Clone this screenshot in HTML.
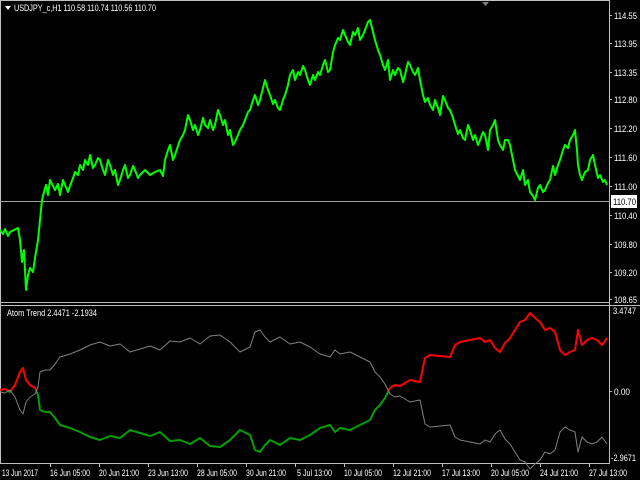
<!DOCTYPE html>
<html><head><style>
body{margin:0;background:#000;width:640px;height:480px;overflow:hidden;font-family:"Liberation Sans",sans-serif;}
svg{display:block}
text{font-family:"Liberation Sans",sans-serif;font-size:9px;fill:#fff}
</style></head><body>
<svg width="640" height="480" viewBox="0 0 640 480">
<defs>
<clipPath id="up"><rect x="0" y="300" width="610" height="91"/></clipPath>
<clipPath id="dn"><rect x="0" y="391" width="610" height="80"/></clipPath>
<polyline id="il" fill="none" stroke-linejoin="round" points="0,390 5,389 10,392 15,385 20,372 23,368 26,380 30,385 35,388 38,395 40,410 45,412 50,412 55,418 60,425 70,428 80,432 90,437 100,440 110,436 120,438 130,430 140,433 150,436 160,432 170,441 180,440 190,444 200,438 210,446 220,447 230,440 240,430 250,435 255,450 260,452 265,445 270,440 280,445 290,438 300,440 310,435 320,428 330,425 335,432 340,428 350,430 360,425 370,420 375,410 380,405 385,398 390,388 395,385 400,386 410,380 420,382 425,358 430,355 440,356 450,357 455,345 460,342 470,340 480,338 485,342 490,340 495,348 500,352 505,343 510,338 515,330 520,322 525,320 530,313 535,318 540,322 545,330 550,328 555,332 560,350 565,355 570,352 575,350 578,330 582,345 587,340 592,338 597,340 602,345 607,338"/>
</defs>
<line x1="609.5" y1="0" x2="609.5" y2="464" stroke="#c0c0c0"/>
<line x1="0" y1="302.5" x2="610" y2="302.5" stroke="#c0c0c0"/>
<line x1="0" y1="305.5" x2="640" y2="305.5" stroke="#c0c0c0"/>
<line x1="0" y1="463.5" x2="610" y2="463.5" stroke="#c0c0c0"/>
<line x1="0.5" y1="0" x2="0.5" y2="464" stroke="#c0c0c0"/>
<line x1="0" y1="0.5" x2="610" y2="0.5" stroke="#c0c0c0"/>
<line x1="0" y1="201.5" x2="610" y2="201.5" stroke="#a0a0a0"/>
<polygon points="482,2 489,2 485.5,6" fill="#808080"/>
<polyline fill="none" stroke="#00ff00" stroke-width="2" stroke-linejoin="round" points="0,230 3,234 5,229 8,236 10,232 14,230 18,228 20,240 22,262 24,250 26,290 28,275 30,268 33,272 35,258 38,240 42,200 44,192 46,185 48,195 50,180 53,186 55,190 58,184 60,195 63,180 65,185 68,192 70,186 73,178 75,172 78,175 80,165 83,170 85,160 88,165 90,155 93,168 95,165 98,158 100,160 103,170 105,175 108,160 110,165 113,175 115,170 118,185 120,180 123,170 125,165 128,178 130,175 133,166 135,170 138,178 140,175 145,170 150,175 155,172 160,170 163,176 165,160 168,150 170,145 173,160 175,155 178,146 180,140 183,135 185,130 188,115 190,120 193,130 195,125 198,135 200,130 203,118 205,125 208,128 210,120 213,130 215,125 218,110 220,115 223,125 225,120 228,135 230,130 233,145 235,142 238,135 240,130 243,125 245,120 248,112 250,110 253,100 255,95 258,105 260,100 263,88 265,80 268,90 270,95 273,104 275,100 278,108 280,110 283,100 285,95 288,85 290,75 293,70 295,80 298,72 300,75 303,66 305,70 308,80 310,85 313,75 315,80 318,72 320,75 323,65 325,60 328,72 330,70 333,52 335,45 338,38 340,40 343,30 345,35 348,42 350,45 353,32 355,35 358,28 360,40 363,35 365,30 368,22 370,20 373,32 375,40 378,50 380,55 383,65 385,70 388,60 390,80 393,70 395,75 398,68 400,70 403,82 405,75 408,62 410,65 413,72 415,75 418,68 420,80 423,95 425,102 428,98 430,105 433,110 435,100 438,108 440,115 443,96 445,100 448,108 450,110 453,118 455,125 458,134 460,130 463,138 465,140 468,125 470,130 473,140 475,135 478,145 480,140 483,132 485,135 488,150 490,130 493,125 495,120 498,140 500,145 503,150 505,140 508,140 510,145 513,160 515,170 518,176 520,180 523,170 525,185 528,180 530,192 533,196 535,200 538,188 540,185 543,192 545,190 548,183 550,180 553,166 555,175 558,165 560,160 563,150 565,145 568,148 570,140 573,135 575,130 577,150 578,165 580,175 582,180 585,172 588,170 590,160 593,155 595,165 598,178 600,175 603,182 605,180 607,185"/>
<use href="#il" stroke="#ff0000" stroke-width="2" clip-path="url(#up)"/>
<use href="#il" stroke="#00a000" stroke-width="2" clip-path="url(#dn)"/>
<use href="#il" stroke="#808080" stroke-width="1" transform="translate(0,782) scale(1,-1)"/>
<polygon points="5,6 11,6 8,10" fill="#fff"/>
<text x="14" y="11" textLength="142" lengthAdjust="spacingAndGlyphs">USDJPY_c,H1  110.58 110.74 110.56 110.70</text>
<text x="7" y="316" textLength="90" lengthAdjust="spacingAndGlyphs">Atom Trend  2.4471 -2.1934</text>
<g stroke="#c0c0c0">
<line x1="609" y1="15.5" x2="612" y2="15.5"/><line x1="609" y1="43.5" x2="612" y2="43.5"/><line x1="609" y1="72.5" x2="612" y2="72.5"/><line x1="609" y1="99.5" x2="612" y2="99.5"/><line x1="609" y1="128.5" x2="612" y2="128.5"/><line x1="609" y1="157.5" x2="612" y2="157.5"/><line x1="609" y1="186.5" x2="612" y2="186.5"/><line x1="609" y1="215.5" x2="612" y2="215.5"/><line x1="609" y1="244.5" x2="612" y2="244.5"/><line x1="609" y1="272.5" x2="612" y2="272.5"/><line x1="609" y1="299.5" x2="612" y2="299.5"/><line x1="609" y1="391.5" x2="612" y2="391.5"/>
</g>
<g>
<text x="614" y="19" textLength="23" lengthAdjust="spacingAndGlyphs">114.55</text><text x="614" y="47" textLength="23" lengthAdjust="spacingAndGlyphs">113.95</text><text x="614" y="76" textLength="23" lengthAdjust="spacingAndGlyphs">113.35</text><text x="614" y="103" textLength="23" lengthAdjust="spacingAndGlyphs">112.80</text><text x="614" y="132" textLength="23" lengthAdjust="spacingAndGlyphs">112.20</text><text x="614" y="161" textLength="23" lengthAdjust="spacingAndGlyphs">111.60</text><text x="614" y="190" textLength="23" lengthAdjust="spacingAndGlyphs">111.00</text><text x="614" y="219" textLength="23" lengthAdjust="spacingAndGlyphs">110.40</text><text x="614" y="248" textLength="23" lengthAdjust="spacingAndGlyphs">109.80</text><text x="614" y="276" textLength="23" lengthAdjust="spacingAndGlyphs">109.20</text><text x="614" y="303" textLength="23" lengthAdjust="spacingAndGlyphs">108.65</text>
<text x="613" y="314" textLength="23" lengthAdjust="spacingAndGlyphs">3.4747</text><text x="614" y="395" textLength="16" lengthAdjust="spacingAndGlyphs">0.00</text><text x="611" y="461" textLength="25" lengthAdjust="spacingAndGlyphs">-2.9671</text>
</g>
<rect x="611" y="195" width="26" height="13" fill="#fff"/>
<text x="613" y="205" textLength="23" lengthAdjust="spacingAndGlyphs" style="fill:#000">110.70</text>
<g stroke="#c0c0c0">
<line x1="50.5" y1="463" x2="50.5" y2="467"/><line x1="99.5" y1="463" x2="99.5" y2="467"/><line x1="148.5" y1="463" x2="148.5" y2="467"/><line x1="197.5" y1="463" x2="197.5" y2="467"/><line x1="246.5" y1="463" x2="246.5" y2="467"/><line x1="295.5" y1="463" x2="295.5" y2="467"/><line x1="344.5" y1="463" x2="344.5" y2="467"/><line x1="393.5" y1="463" x2="393.5" y2="467"/><line x1="442.5" y1="463" x2="442.5" y2="467"/><line x1="491.5" y1="463" x2="491.5" y2="467"/><line x1="540.5" y1="463" x2="540.5" y2="467"/><line x1="589.5" y1="463" x2="589.5" y2="467"/>
</g>
<g>
<text x="2" y="476" textLength="36" lengthAdjust="spacingAndGlyphs">13 Jun 2017</text><text x="50" y="476" textLength="40" lengthAdjust="spacingAndGlyphs">16 Jun 05:00</text><text x="99" y="476" textLength="40" lengthAdjust="spacingAndGlyphs">20 Jun 21:00</text><text x="148" y="476" textLength="40" lengthAdjust="spacingAndGlyphs">23 Jun 13:00</text><text x="197" y="476" textLength="40" lengthAdjust="spacingAndGlyphs">28 Jun 05:00</text><text x="246" y="476" textLength="40" lengthAdjust="spacingAndGlyphs">30 Jun 21:00</text><text x="297" y="476" textLength="35" lengthAdjust="spacingAndGlyphs">5 Jul 13:00</text><text x="344" y="476" textLength="38" lengthAdjust="spacingAndGlyphs">10 Jul 05:00</text><text x="393" y="476" textLength="38" lengthAdjust="spacingAndGlyphs">12 Jul 21:00</text><text x="442" y="476" textLength="38" lengthAdjust="spacingAndGlyphs">17 Jul 13:00</text><text x="491" y="476" textLength="38" lengthAdjust="spacingAndGlyphs">20 Jul 05:00</text><text x="540" y="476" textLength="38" lengthAdjust="spacingAndGlyphs">24 Jul 21:00</text><text x="589" y="476" textLength="38" lengthAdjust="spacingAndGlyphs">27 Jul 13:00</text>
</g>
</svg>
</body></html>
